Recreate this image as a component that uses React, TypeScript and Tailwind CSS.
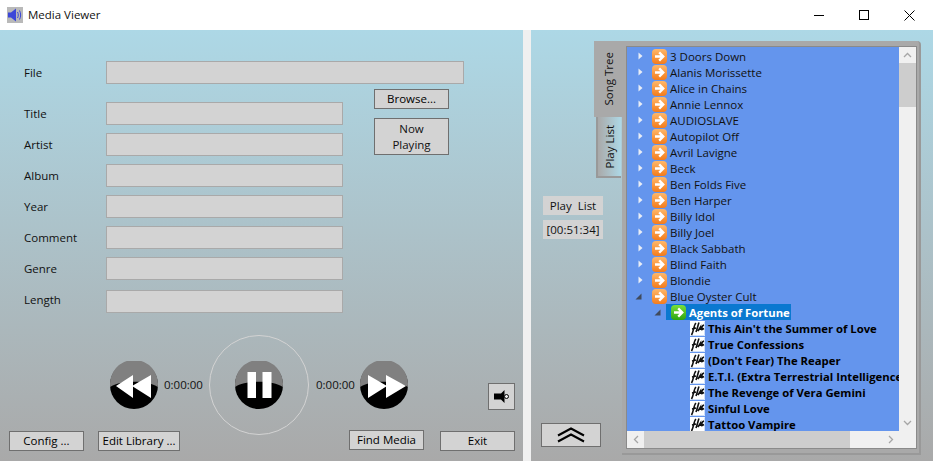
const artists = ["3 Doors Down", "Alanis Morissette", "Alice in Chains", "Annie Lennox", "AUDIOSLAVE", "Autopilot Off", "Avril Lavigne", "Beck", "Ben Folds Five", "Ben Harper", "Billy Idol", "Billy Joel", "Black Sabbath", "Blind Faith", "Blondie"];
const songs = ["This Ain't the Summer of Love", "True Confessions", "(Don't Fear) The Reaper", "E.T.I. (Extra Terrestrial Intelligence", "The Revenge of Vera Gemini", "Sinful Love", "Tattoo Vampire"];
const fields = [
  { label: "Title", mb: "mb-2", labelClass: "" },
  { label: "Artist", mb: "mb-2", labelClass: "" },
  { label: "Album", mb: "mb-2", labelClass: "" },
  { label: "Year", mb: "mb-2", labelClass: "" },
  { label: "Comment", mb: "mb-2", labelClass: "" },
  { label: "Genre", mb: "mb-[10px]", labelClass: "" },
  { label: "Length", mb: "", labelClass: "mb-[3px]" },
];

const btn = "h-5 border border-[#6f6f6f] bg-[#d3d3d3] text-[11.5px] leading-4 text-black flex items-center justify-center";

function ArrowIcon({ green }: { green?: boolean }) {
  const from = green ? "#7be03a" : "#ffb86a";
  const to = green ? "#2ba510" : "#f47c1c";
  const id = green ? "gg" : "og";
  return (
    <svg width="15" height="15" viewBox="0 0 15 15" className="shrink-0">
      <defs>
        <linearGradient id={id} x1="0" y1="0" x2="0" y2="1">
          <stop offset="0" stopColor={from} />
          <stop offset="1" stopColor={to} />
        </linearGradient>
      </defs>
      <rect x="0" y="0" width="15" height="15" rx="4" fill={`url(#${id})`} />
      <path d="M3 7.5H10.5M7.2 3.4L11.3 7.5L7.2 11.6" fill="none" stroke="#fff" strokeWidth="2.3" />
    </svg>
  );
}

function FlacIcon() {
  return (
    <svg width="15" height="15" viewBox="0 0 15 15" className="shrink-0">
      <rect width="15" height="15" fill="#fff" />
      <path d="M14.5 0.5V14.5H0.5" fill="none" stroke="#cfe0fb" />
      <path d="M1.5 14C4 10 3.5 4 6 2M2 8L6 7M6 11C7.5 7 8 4 9 1.5M8 10L10.5 6V9M14 4C12 4.5 11.5 7 12 8.5L14 7.5" fill="none" stroke="#111" strokeWidth="1.6" />
    </svg>
  );
}

function Expander({ open }: { open?: boolean }) {
  return open ? (
    <svg width="7" height="7" viewBox="0 0 7 7" className="shrink-0"><path d="M6.5 0.5V6.5H0.5Z" fill="#404a5c" /></svg>
  ) : (
    <svg width="5" height="8" viewBox="0 0 5 8" className="shrink-0"><path d="M0.5 0.5L4.5 4L0.5 7.5Z" fill="#e8edf6" /></svg>
  );
}

function RoundButton({ children }: { children: React.ReactNode }) {
  return (
    <svg width="48" height="48" viewBox="0 0 48 48" className="shrink-0">
      <circle cx="24" cy="24" r="24" fill="#000" />
      <path d="M0.2 26A24 24 0 1 1 47.8 26C38 19 10 19 0.2 26Z" fill="#808080" />
      {children}
    </svg>
  );
}

function TreeRow({ children }: { children: React.ReactNode }) {
  return <div className="h-4 flex items-center whitespace-nowrap">{children}</div>;
}

export default function App() {
  return (
    <div className="w-[933px] h-[461px] overflow-hidden bg-[#f0f0f0] flex flex-col font-['Open_Sans','Noto_Sans',sans-serif] text-[11.5px] text-[#111]">
      <div className="h-[30px] bg-white flex items-center shrink-0">
        <svg width="16" height="16" viewBox="0 0 16 16" className="ml-[7px] shrink-0">
          <rect width="16" height="16" fill="#b9b9b9" />
          <path d="M1 5.5H4L9 1.5V14.5L4 10.5H1Z" fill="#3b46d8" />
          <path d="M10.5 5C11.5 6.5 11.5 9.5 10.5 11M12.5 3.5C14 6 14 10 12.5 12.5" fill="none" stroke="#3b46d8" strokeWidth="1" />
        </svg>
        <span className="ml-[5px] text-[#111]">Media Viewer</span>
        <div className="ml-auto flex items-center">
          <svg width="10" height="10" viewBox="0 0 10 10" className="mr-[35px]"><path d="M0 5.5H10" stroke="#000" /></svg>
          <svg width="10" height="10" viewBox="0 0 10 10" className="mr-[35px]"><rect x="0.5" y="0.5" width="9" height="9" fill="none" stroke="#000" /></svg>
          <svg width="11" height="11" viewBox="0 0 11 11" className="mr-[18px]"><path d="M0.5 0.5L10.5 10.5M10.5 0.5L0.5 10.5" stroke="#000" /></svg>
        </div>
      </div>

      <div className="flex-1 flex min-h-0">
        {/* left panel */}
        <div className="w-[523px] shrink-0 bg-gradient-to-b from-[#add8e6] to-[#a9a9a9] flex flex-col pl-[9px] pr-[8px] pt-[31px]">
          <div className="flex items-center h-[23px] pl-[15px]">
            <span className="w-[82px]">File</span>
            <div className="w-[358px] h-[23px] bg-[#d3d3d3] border border-[#a9a9a9]" />
          </div>

          <div className="flex mt-[5px]">
            <div className="pt-[13px]">
              {fields.map((f) => (
                <div key={f.label} className={`flex items-center h-[23px] pl-[15px] ${f.mb}`}>
                  <span className={`w-[82px] ${f.labelClass}`}>{f.label}</span>
                  <div className="w-[237px] h-[23px] bg-[#d3d3d3] border border-[#a9a9a9]" />
                </div>
              ))}
            </div>
            <div className="ml-[31px] w-[75px] flex flex-col gap-[9px]">
              <div className={btn}>Browse...</div>
              <div className="h-[37px] border border-[#6f6f6f] bg-[#d3d3d3] leading-[16px] text-center flex items-center justify-center">Now<br />Playing</div>
            </div>
          </div>

          <div className="flex items-center h-[100px] mt-[22px] pl-[101px]">
            <RoundButton>
              <path d="M6 25L23 14V37ZM22 25L41 14V37Z" fill="#fff" />
            </RoundButton>
            <span className="ml-[6px] w-[45px]">0:00:00</span>
            <div className="w-[100px] h-[100px] rounded-full border border-[#d3d3d3] flex items-center justify-center shrink-0">
              <RoundButton>
                <path d="M12.5 11H21V37H12.5ZM27.5 11H36.5V37H27.5Z" fill="#fff" />
              </RoundButton>
            </div>
            <span className="ml-[7px] w-[44px]">0:00:00</span>
            <RoundButton>
              <path d="M8 14L27 25L8 37ZM26 14L46 25L26 37Z" fill="#fff" />
            </RoundButton>
            <div className="ml-[80px] mt-[22px] w-[27px] h-[27px] border border-[#6f6f6f] bg-[#d3d3d3] flex items-center justify-center shrink-0">
              <svg width="16" height="13" viewBox="0 0 16 13">
                <path d="M0 3.5H7L10.5 0V13L7 9.5H0Z" fill="#000" />
                <circle cx="12.5" cy="6.5" r="2" fill="#eee" stroke="#000" />
              </svg>
            </div>
          </div>

          <div className="flex items-start mt-[-4px]">
            <div className={`${btn} w-[75px]`}>Config ...</div>
            <div className={`${btn} w-[82px] ml-[14px]`}>Edit Library ...</div>
            <div className={`${btn} w-[75px] ml-[169px] mt-[-1px]`}>Find Media</div>
            <div className={`${btn} w-[75px] ml-[16px]`}>Exit</div>
          </div>
        </div>

        <div className="w-2 shrink-0 bg-[#f0f0f0]" />

        {/* right panel */}
        <div className="flex-1 bg-gradient-to-b from-[#add8e6] to-[#a9a9a9] flex pl-[12px] pt-[11px] pb-[6px]">
          <div className="w-[51px] shrink-0 flex flex-col items-start">
            <div className="mt-[155px] w-[60px] h-[19px] bg-[#d3d3d3] flex items-center justify-center whitespace-nowrap shrink-0">Play&nbsp;&nbsp;List</div>
            <div className="mt-[5px] w-[60px] h-[19px] bg-[#d3d3d3] flex items-center justify-center shrink-0">[00:51:34]</div>
            <div className="mt-auto mb-[8px] ml-[-2px] w-[60px] h-[24px] border border-[#6f6f6f] bg-[#d3d3d3] flex items-center justify-center shrink-0">
              <svg width="28" height="16" viewBox="0 0 28 16"><path d="M1 8.5L14 1.5L27 8.5M1 14.5L14 7.5L27 14.5" fill="none" stroke="#000" strokeWidth="2" /></svg>
            </div>
          </div>

          <div className="flex shrink-0">
            <div className="flex flex-col items-end w-[28px]">
              <div className="w-[28px] h-[76px] pl-[2px] bg-[#a9a9a9] flex items-center justify-center">
                <span className="[writing-mode:vertical-rl] rotate-180 whitespace-nowrap">Song Tree</span>
              </div>
              <div className="w-[25px] h-[61px] mr-[1px] self-end border-l-2 border-b-2 border-[#999] bg-gradient-to-r from-[#a9a9a9] to-[#add8e6] flex items-center justify-center">
                <span className="[writing-mode:vertical-rl] rotate-180 whitespace-nowrap">Play List</span>
              </div>
            </div>

            <div className="w-[299px] bg-[#a9a9a9] border-r-2 border-b-2 border-[#999] pl-[4px] pr-[2px] pt-[5px] pb-[4px] rounded-tr-sm">
              <div className="w-[291px] h-[403px] border border-[#8a8a8a] bg-[#f0f0f0] flex flex-col overflow-hidden">
                <div className="flex flex-1 min-h-0">
                  <div className="w-[273px] bg-[#6495ed] overflow-hidden pt-px">
                    {artists.map((a) => (
                      <TreeRow key={a}>
                        <span className="w-[25px] pl-[11px] flex shrink-0"><Expander /></span>
                        <ArrowIcon />
                        <span className="ml-[3px] mt-[2px]">{a}</span>
                      </TreeRow>
                    ))}
                    <TreeRow>
                      <span className="w-[25px] pl-[8px] flex shrink-0"><Expander open /></span>
                      <ArrowIcon />
                      <span className="ml-[3px] mt-[2px]">Blue Oyster Cult</span>
                    </TreeRow>
                    <TreeRow>
                      <span className="w-[39px] pl-[27px] flex shrink-0"><Expander open /></span>
                      <span className="flex items-center bg-[#0a78d0] h-4 pl-[5px] pr-px">
                        <ArrowIcon green />
                        <span className="ml-[3px] mt-[2px] font-bold text-[11.3px] text-white">Agents of Fortune</span>
                      </span>
                    </TreeRow>
                    {songs.map((s) => (
                      <TreeRow key={s}>
                        <span className="w-[63px] shrink-0" />
                        <FlacIcon />
                        <span className="ml-[3px] mt-[2px] font-bold text-[11.3px] text-black">{s}</span>
                      </TreeRow>
                    ))}
                  </div>
                  <div className="w-[17px] flex flex-col bg-[#f0f0f0]">
                    <div className="h-[16px] flex items-center justify-center">
                      <svg width="9" height="6" viewBox="0 0 9 6"><path d="M1 5L4.5 1.5L8 5" fill="none" stroke="#a6a6a6" strokeWidth="1.3" /></svg>
                    </div>
                    <div className="h-[44px] bg-[#cdcdcd]" />
                    <div className="flex-1" />
                    <div className="h-[17px] flex items-center justify-center">
                      <svg width="9" height="6" viewBox="0 0 9 6"><path d="M1 1L4.5 4.5L8 1" fill="none" stroke="#a6a6a6" strokeWidth="1.3" /></svg>
                    </div>
                  </div>
                </div>
                <div className="h-[17px] flex shrink-0 bg-[#f0f0f0]">
                  <div className="w-[17px] flex items-center justify-center">
                    <svg width="6" height="9" viewBox="0 0 6 9"><path d="M5 1L1.5 4.5L5 8" fill="none" stroke="#a6a6a6" strokeWidth="1.3" /></svg>
                  </div>
                  <div className="w-[206px] bg-[#cdcdcd]" />
                  <div className="flex-1 flex items-center justify-end pr-[5px]">
                    <svg width="6" height="9" viewBox="0 0 6 9"><path d="M1 1L4.5 4.5L1 8" fill="none" stroke="#a6a6a6" strokeWidth="1.3" /></svg>
                  </div>
                  <div className="w-[17px]" />
                </div>
              </div>
            </div>
          </div>
        </div>
      </div>
    </div>
  );
}
